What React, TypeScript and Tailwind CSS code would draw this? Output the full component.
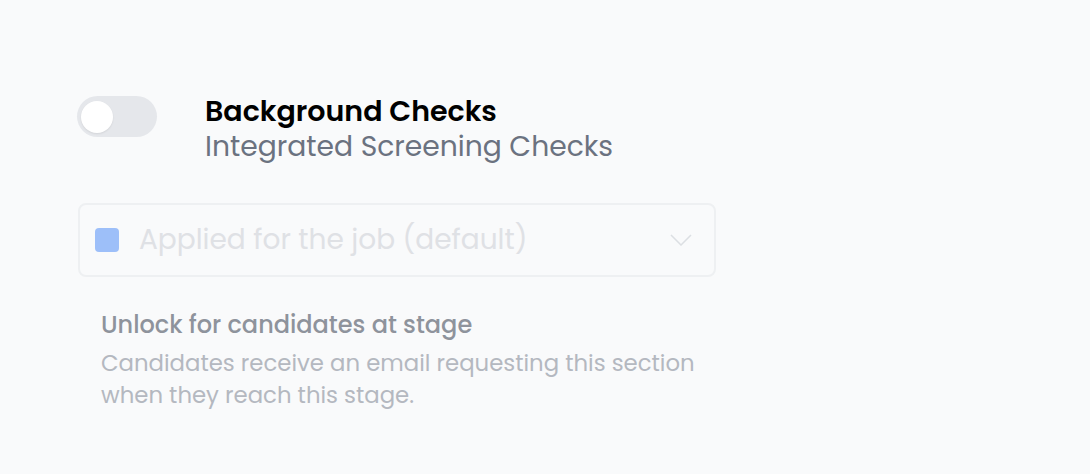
import React from "react";

export default function App() {
  return (
    <div className="min-h-[474px] w-full bg-[#f9fafb] pl-[77px] pt-[94px] font-['Poppins','Inter',sans-serif]">
      <div className="flex items-start gap-[48px]">
        <div className="mt-[2px] flex h-[41px] w-[80px] items-center rounded-full bg-[#e5e7eb] px-[4px]">
          <div className="h-[32px] w-[32px] rounded-full bg-white shadow-[0_1px_2px_rgba(0,0,0,0.08)]" />
        </div>
        <div className="flex flex-col">
          <div className="text-[28.5px] font-semibold leading-[35px] text-black">Background Checks</div>
          <div className="text-[28.2px] font-normal leading-[35px] text-[#6b7280]">Integrated Screening Checks</div>
        </div>
      </div>
      <div className="ml-[1px] mt-[39px] flex h-[74px] w-[638px] items-center rounded-[8px] border-2 border-[#eef0f2] pl-[15px] pr-[22px]">
        <div className="h-[24px] w-[24px] rounded-[4px] bg-[#9dbff9]" />
        <div className="ml-[20px] flex-1 text-[28px] leading-[36px] text-[#dfe1e5]">Applied for the job (default)</div>
        <svg width="22" height="12" viewBox="0 0 22 12" fill="none" stroke="#dcdfe3" strokeWidth="1.5">
          <path d="M1 1l10 10L21 1" />
        </svg>
      </div>
      <div className="mt-[32px] pl-[24px]">
        <div className="text-[24px] font-medium leading-[32px] text-[#8e939c]">Unlock for candidates at stage</div>
        <div className="mt-[6px] w-[610px] text-[22.8px] leading-[32px] text-[#b4b8c0]">
          Candidates receive an email requesting this section when they reach this stage.
        </div>
      </div>
    </div>
  );
}
